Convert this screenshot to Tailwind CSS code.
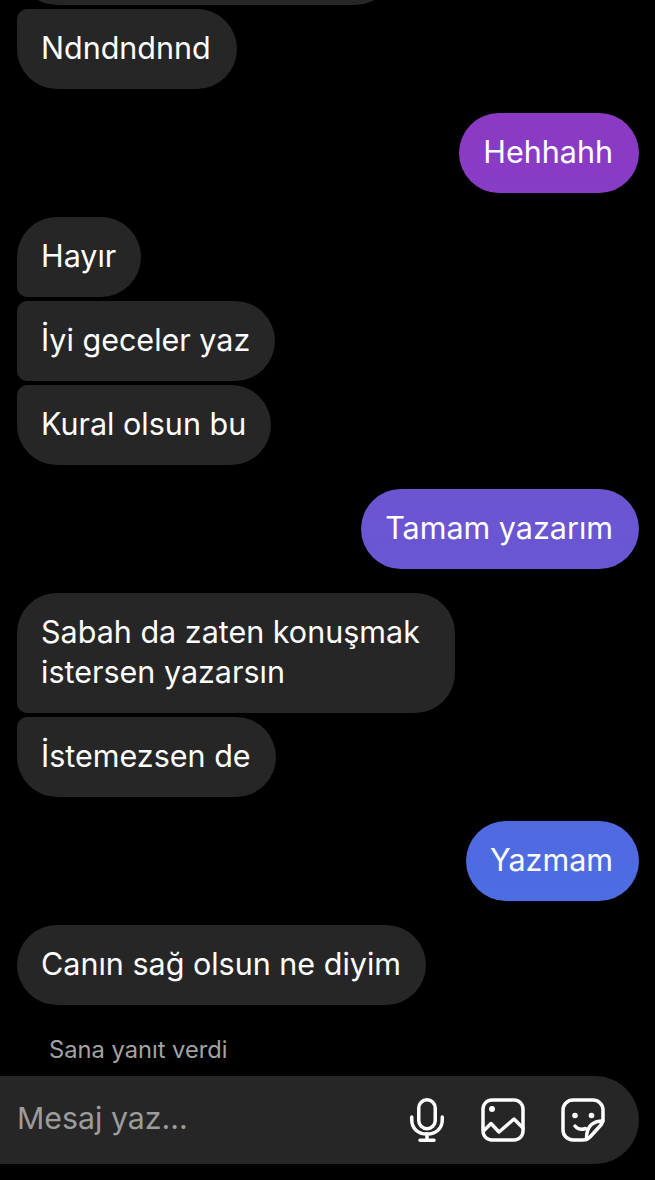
<!DOCTYPE html>
<html lang="en">
<head>
  <meta charset="UTF-8" />
  <title>Mesajlar</title>
  <meta name="viewport" content="width=device-width, initial-scale=1.0" />
  <script src="https://cdn.jsdelivr.net/npm/@tailwindcss/browser@4"></script>
</head>
<body class="bg-black text-white w-[655px] h-[1180px] overflow-hidden font-['Inter',sans-serif]">

  <div class="flex flex-col gap-6 pr-4 pl-[17px] text-[30.5px] leading-[40px] font-[370]">

    <div class="flex flex-col items-start gap-1">
      <div class="w-[378px] h-[80px] -mt-[75px] bg-[#262626] rounded-[40px]"></div>
      <div class="bg-[#262626] pl-6 pr-[26px] pt-[19px] pb-[21px] rounded-[40px] rounded-tl-[10px]">Ndndndnnd</div>
    </div>

    <div class="self-end bg-linear-to-b from-[#8b39c2] to-[#873dc6] pl-6 pr-[26px] pt-[19px] pb-[21px] rounded-[40px]">Hehhahh</div>

    <div class="flex flex-col items-start gap-1">
      <div class="bg-[#262626] pl-6 pr-[25px] pt-[19px] pb-[21px] rounded-[40px] rounded-bl-[10px]">Hayır</div>
      <div class="bg-[#262626] pl-6 pr-[25px] pt-[19px] pb-[21px] rounded-r-[40px] rounded-l-[10px]">İyi geceler yaz</div>
      <div class="bg-[#262626] pl-6 pr-[25px] pt-[19px] pb-[21px] rounded-[40px] rounded-tl-[10px]">Kural olsun bu</div>
    </div>

    <div class="self-end bg-linear-to-b from-[#6d54d1] to-[#6857d4] pl-6 pr-[26px] pt-[19px] pb-[21px] rounded-[40px]">Tamam yazarım</div>

    <div class="flex flex-col items-start gap-1">
      <div class="w-[438px] bg-[#262626] pl-6 pr-[25px] pt-[19px] pb-[21px] rounded-[40px] rounded-bl-[10px]">Sabah da zaten konuşmak<br />istersen yazarsın</div>
      <div class="bg-[#262626] pl-6 pr-[25px] pt-[19px] pb-[21px] rounded-[40px] rounded-tl-[10px]">İstemezsen de</div>
    </div>

    <div class="self-end bg-linear-to-b from-[#5069e0] to-[#4d6de3] pl-6 pr-[26px] pt-[19px] pb-[21px] rounded-[40px]">Yazmam</div>

    <div class="self-start bg-[#262626] pl-6 pr-[25px] pt-[19px] pb-[21px] rounded-[40px]">Canın sağ olsun ne diyim</div>
  </div>

  <div class="mt-[31px] pl-[49px] text-[23.7px] leading-[28px] font-[370] text-[#a3a3a3]">Sana yanıt verdi</div>

  <div class="mt-3 w-[639px] h-[88px] bg-[#262626] rounded-r-[44px] flex items-center pl-[17px]">
    <span class="flex-1 text-[30.300px] font-[370] -mt-[2px] text-[#9c9c9c]">Mesaj yaz...</span>

    <div class="flex items-center pr-[34px]">
      <!-- mic -->
      <svg class="w-[44px] h-[44px] mr-8" viewBox="0 0 44 44" fill="none" stroke="white" stroke-width="3.5" stroke-linecap="round" stroke-linejoin="round">
        <rect x="13.750" y="1.750" width="16.500" height="29" rx="8.250" />
        <path d="M6.750 19V22C6.750 30.500 13 36 22 36C31 36 37.250 30.500 37.250 22V19" />
        <path d="M22 36V42M15 42.200H29" />
      </svg>
      <!-- image -->
      <svg class="w-[44px] h-[44px] mr-9" viewBox="0 0 44 44" fill="none" stroke="white" stroke-width="3.5" stroke-linecap="round" stroke-linejoin="round">
        <rect x="2" y="2" width="40" height="40" rx="9" />
        <circle cx="11" cy="11" r="3" fill="white" stroke="none" />
        <path d="M3.500 32L10 25.500L18 34L33 21L42 30" />
      </svg>
      <!-- sticker -->
      <svg class="w-[44px] h-[44px]" viewBox="0 0 44 44" fill="none" stroke="white" stroke-width="3.5" stroke-linecap="round" stroke-linejoin="round">
        <path d="M22 42H12A10 10 0 0 1 2 32V12A10 10 0 0 1 12 2H32A10 10 0 0 1 42 12V21C42 24 41 26 39 28L29 39C27 41 25 42 22 42Z" />
        <path d="M42 23C33 23 25 27 25.500 41.500" />
        <circle cx="14" cy="17.500" r="2.800" fill="white" stroke="none" />
        <circle cx="30.500" cy="17.500" r="2.800" fill="white" stroke="none" />
        <path d="M14 28C16.500 31 20.500 32 24.500 30.500" />
      </svg>
    </div>
  </div>

</body>
</html>
